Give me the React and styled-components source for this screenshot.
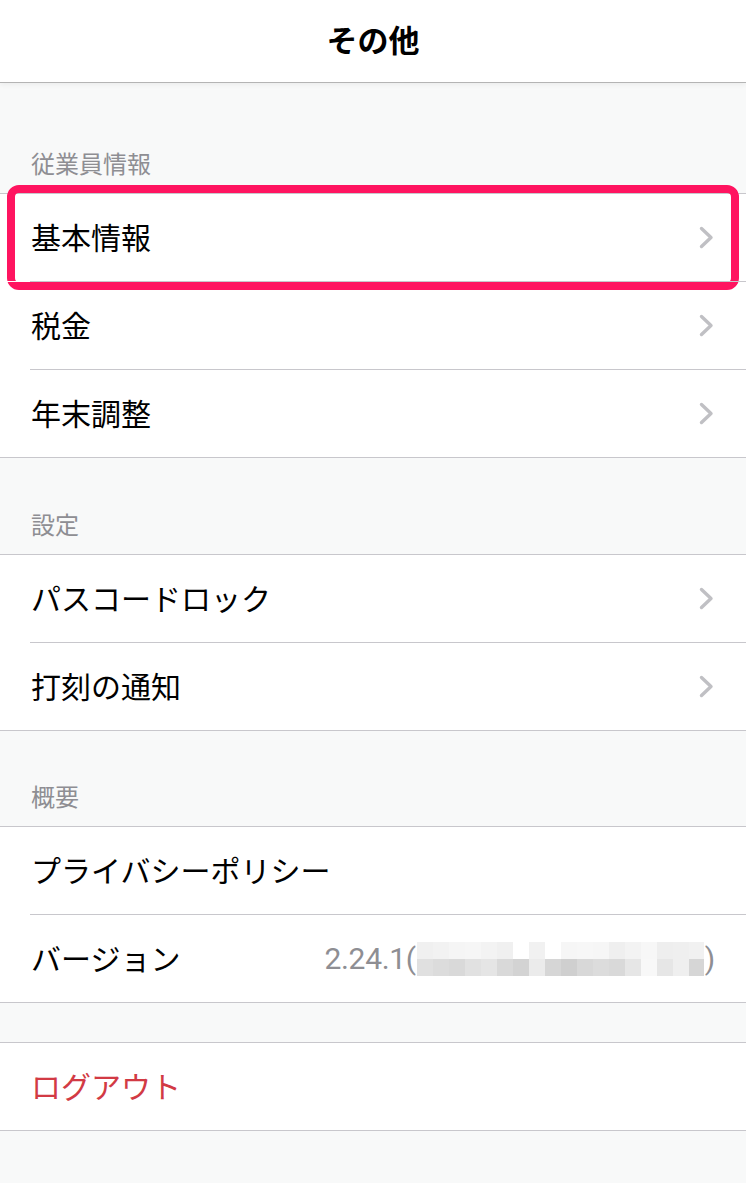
import React from 'react'
import styled, { createGlobalStyle } from 'styled-components'

const GlobalStyle = createGlobalStyle`
	html, body {
		margin: 0;
		padding: 0;
		background: #f8f9f9;
	}
	body {
		font-family: "Noto Sans CJK JP", "Noto Sans", sans-serif;
		-webkit-font-smoothing: antialiased;
	}
`

const Screen = styled.div`
	width: 746px;
	min-height: 1183px;
	background: #f8f9f9;
	display: flex;
	flex-direction: column;
`

const Header = styled.header`
	height: 83px;
	background: #ffffff;
	border-bottom: 1px solid #b4b4b4;
	box-shadow: 0 2px 5px rgba(0, 0, 0, 0.05);
	display: flex;
	align-items: center;
	justify-content: center;
	box-sizing: border-box;
	padding-bottom: 6px;
	position: relative;
	z-index: 1;
`

const Title = styled.h1`
	margin: 0;
	font-size: 31px;
	font-weight: 700;
	color: #000;
	line-height: 1;
`

const SectionHeader = styled.div`
	height: ${props => props.$height}px;
	box-sizing: border-box;
	padding: 0 31px 15px;
	display: flex;
	align-items: flex-end;
	font-size: 24px;
	line-height: 30px;
	color: #8e8e93;
`

const Spacer = styled.div`
	height: ${props => props.$height}px;
`

const Group = styled.div`
	background: #ffffff;
	border-top: 1px solid #c8c7cc;
	border-bottom: 1px solid #c8c7cc;
`

const Row = styled.div`
	position: relative;
	height: 87px;
	display: flex;
	align-items: center;
	justify-content: space-between;
	padding: 0 32px 0 31px;
	box-sizing: border-box;

	& + & {
		border-top: 1px solid #c8c7cc;
		height: 88px;
	}
	& + &::before {
		content: '';
		position: absolute;
		top: -1px;
		left: 0;
		width: 30px;
		height: 1px;
		background: #ffffff;
	}
`

const Label = styled.span`
	font-size: 30px;
	line-height: 1;
	padding-bottom: 3px;
	color: ${props => (props.$danger ? '#d23a44' : '#000000')};
`

const Value = styled.span`
	display: flex;
	align-items: center;
	font-family: Roboto, "Noto Sans CJK JP", sans-serif;
	font-size: 30px;
	color: #8e8e93;
	letter-spacing: -0.3px;
	margin-right: -1px;
`

const Highlight = styled.div`
	position: absolute;
	top: -9px;
	bottom: -9px;
	left: 7px;
	right: 7px;
	border: 8px solid #ff1460;
	border-radius: 12px;
	pointer-events: none;
`

const Chevron = () => (
	<svg width="15" height="23" viewBox="0 0 15 23">
		<polyline points="2.5,2.5 12,11.5 2.5,20.5" fill="none" stroke="#c0c0c4" strokeWidth="3.4" strokeLinecap="round" strokeLinejoin="round" />
	</svg>
)

const topShades = ['#f0f0f0', '#f2f2f2', '#f5f5f5', '#f6f6f6', '#f3f3f3', '#f0f0f0', '#ffffff', '#f1f1f1', '#ffffff', '#f6f6f6', '#f7f7f7', '#f6f6f6', '#efefef', '#f3f3f3', '#f7f7f7', '#eeeeee', '#efefef', '#f1f1f1']
const bottomShades = ['#e0e0e0', '#dcdcdc', '#d9d9d9', '#e1e1e1', '#e5e5e5', '#d9d9d9', '#d3d3d3', '#ebebeb', '#d6d6d6', '#cfcfcf', '#d8d8d8', '#dcdcdc', '#d9d9d9', '#e6e6e6', '#f8f8f8', '#e6e6e6', '#efefef', '#d6d6d6']

const Mosaic = () => (
	<svg width="287" height="34" viewBox="0 0 287 34" style={{ display: 'block', margin: '0 1px' }}>
		{topShades.map((c, i) => (
			<rect key={'t' + i} x={i * 16} y="0" width="16" height="17" fill={c} />
		))}
		{bottomShades.map((c, i) => (
			<rect key={'b' + i} x={i * 16} y="17" width="16" height="17" fill={c} />
		))}
	</svg>
)

const App = () => {
	return (
		<Screen>
			<GlobalStyle />
			<Header>
				<Title>その他</Title>
			</Header>

			<SectionHeader $height={110}>従業員情報</SectionHeader>
			<Group>
				<Row>
					<Label>基本情報</Label>
					<Chevron />
					<Highlight />
				</Row>
				<Row>
					<Label>税金</Label>
					<Chevron />
				</Row>
				<Row>
					<Label>年末調整</Label>
					<Chevron />
				</Row>
			</Group>

			<SectionHeader $height={96}>設定</SectionHeader>
			<Group>
				<Row>
					<Label>パスコードロック</Label>
					<Chevron />
				</Row>
				<Row>
					<Label>打刻の通知</Label>
					<Chevron />
				</Row>
			</Group>

			<SectionHeader $height={95}>概要</SectionHeader>
			<Group>
				<Row>
					<Label>プライバシーポリシー</Label>
				</Row>
				<Row>
					<Label>バージョン</Label>
					<Value>
						2.24.1(
						<Mosaic />
						)
					</Value>
				</Row>
			</Group>

			<Spacer $height={39} />
			<Group>
				<Row>
					<Label $danger>ログアウト</Label>
				</Row>
			</Group>
		</Screen>
	)
}

export default App
